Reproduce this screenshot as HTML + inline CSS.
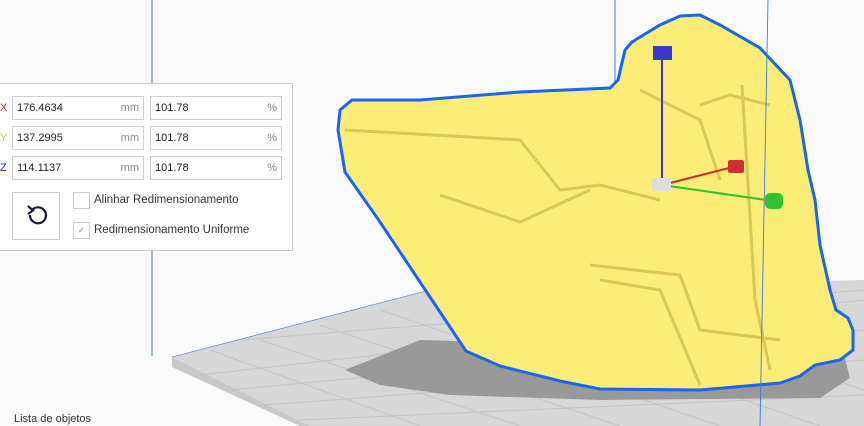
<!DOCTYPE html>
<html><head><style>
body{margin:0;width:864px;height:426px;overflow:hidden;background:#fafafa;font-family:"Liberation Sans",sans-serif;position:relative}
.p{position:absolute;left:-1px;top:83px;width:294px;height:168px;background:#fff;border:1px solid #ccc;box-sizing:border-box}
.f{position:absolute;height:24px;border:1px solid #d0d0d0;box-sizing:border-box;font-size:11px;color:#222;line-height:22px;padding-left:4px;background:#fff}
.u{position:absolute;right:4px;top:0;color:#888}
.l{position:absolute;left:0;font-size:11px}
.cb{position:absolute;left:73px;width:17px;height:17px;border:1px solid #ccc;box-sizing:border-box}
.t{position:absolute;left:94px;font-size:11.5px;color:#333}
</style></head><body>
<svg width="864" height="426" style="position:absolute;left:0;top:0">
<polygon points="172,357 430,290 864,280 864,426 310,426" fill="#d6d6d6"/>
<polygon points="172,357 172,367 300,426 310,426" fill="#c8c8c8"/>
<g stroke="#bbb" stroke-width="1" opacity=".7">
<line x1="210" y1="350" x2="420" y2="426"/><line x1="260" y1="340" x2="520" y2="426"/><line x1="320" y1="325" x2="620" y2="426"/><line x1="380" y1="310" x2="720" y2="426"/><line x1="440" y1="295" x2="820" y2="426"/><line x1="560" y1="290" x2="864" y2="390"/>
<line x1="200" y1="375" x2="864" y2="300"/><line x1="230" y1="390" x2="864" y2="330"/><line x1="265" y1="405" x2="864" y2="360"/><line x1="300" y1="420" x2="864" y2="395"/><line x1="240" y1="340" x2="864" y2="290"/>
</g>
<polygon points="345,370 420,340 600,345 840,340 850,378 820,398 600,400 450,395 380,385" fill="#999"/>
<line x1="152" y1="0" x2="152" y2="356" stroke="#3a78e0"/>
<line x1="172" y1="357" x2="430" y2="290" stroke="#3a78e0" stroke-width=".6"/>
<line x1="615" y1="0" x2="615" y2="90" stroke="#3a78e0"/>
<polygon points="340,110 352,100 420,100 520,92 610,88 618,80 625,50 632,42 660,25 680,16 700,15 720,25 760,48 790,80 800,120 808,170 815,200 820,245 830,290 836,310 848,318 853,330 853,350 840,360 815,365 800,376 780,383 700,390 600,389 560,381 500,366 466,351 420,282 380,222 345,172 338,130" fill="#fbed78" stroke="#1a66ee" stroke-width="3"/>
<path d="M345,130 L520,140 L560,190 L600,185 L660,200 M440,195 L520,222 L590,190 M590,265 L680,275 L700,330 L780,340 M600,280 L660,290 L700,385 M700,105 L730,95 L770,105 M640,90 L700,120 L720,180 M742,85 L755,300 L770,370" stroke="#dcc656" stroke-width="3" fill="none"/>
<line x1="768" y1="0" x2="760" y2="426" stroke="#3a78e0" stroke-width=".9"/>
<line x1="662" y1="55" x2="662" y2="185" stroke="#3636c8" stroke-width="2"/>
<rect x="653" y="46" width="19" height="14" fill="#3a3ac8"/>
<line x1="662" y1="185" x2="737" y2="166" stroke="#c83030" stroke-width="2"/>
<rect x="728" y="160" width="16" height="13" rx="2" fill="#d03030"/>
<line x1="662" y1="185" x2="773" y2="201" stroke="#30c030" stroke-width="2"/>
<rect x="765" y="193" width="18" height="16" rx="5" fill="#30c030"/>
<rect x="652" y="178" width="19" height="13" rx="2" fill="#ddd"/>
</svg>
<div class="p"></div>
<div style="position:absolute;left:0;top:83px;width:293px;height:167px">
<span class="l" style="top:19px;color:#e02020">X</span>
<span class="l" style="top:49px;color:#c0d010">Y</span>
<span class="l" style="top:79px;color:#2020e0">Z</span>
<div class="f" style="left:12px;top:13px;width:132px">176.4634<span class="u">mm</span></div>
<div class="f" style="left:150px;top:13px;width:132px">101.78<span class="u">%</span></div>
<div class="f" style="left:12px;top:43px;width:132px">137.2995<span class="u">mm</span></div>
<div class="f" style="left:150px;top:43px;width:132px">101.78<span class="u">%</span></div>
<div class="f" style="left:12px;top:73px;width:132px">114.1137<span class="u">mm</span></div>
<div class="f" style="left:150px;top:73px;width:132px">101.78<span class="u">%</span></div>
<div style="position:absolute;left:12px;top:109px;width:48px;height:48px;border:1px solid #ccc;box-sizing:border-box">
<svg width="46" height="46"><path d="M19,17 A8,8 0 1 1 17,22" stroke="#1a1a40" stroke-width="2.2" fill="none"/><path d="M15,13 L20,17.5 L15,21" stroke="#1a1a40" stroke-width="2.2" fill="none"/></svg></div>
<div class="cb" style="top:109px"></div><span class="t" style="top:111px">Alinhar Redimensionamento</span>
<div class="cb" style="top:139px;font-size:9px;color:#888;text-align:center;line-height:15px">✓</div><span class="t" style="top:141px">Redimensionamento Uniforme</span>
</div>
<div style="position:absolute;left:14px;top:413px;font-size:11px;color:#333">Lista de objetos</div>
</body></html>
